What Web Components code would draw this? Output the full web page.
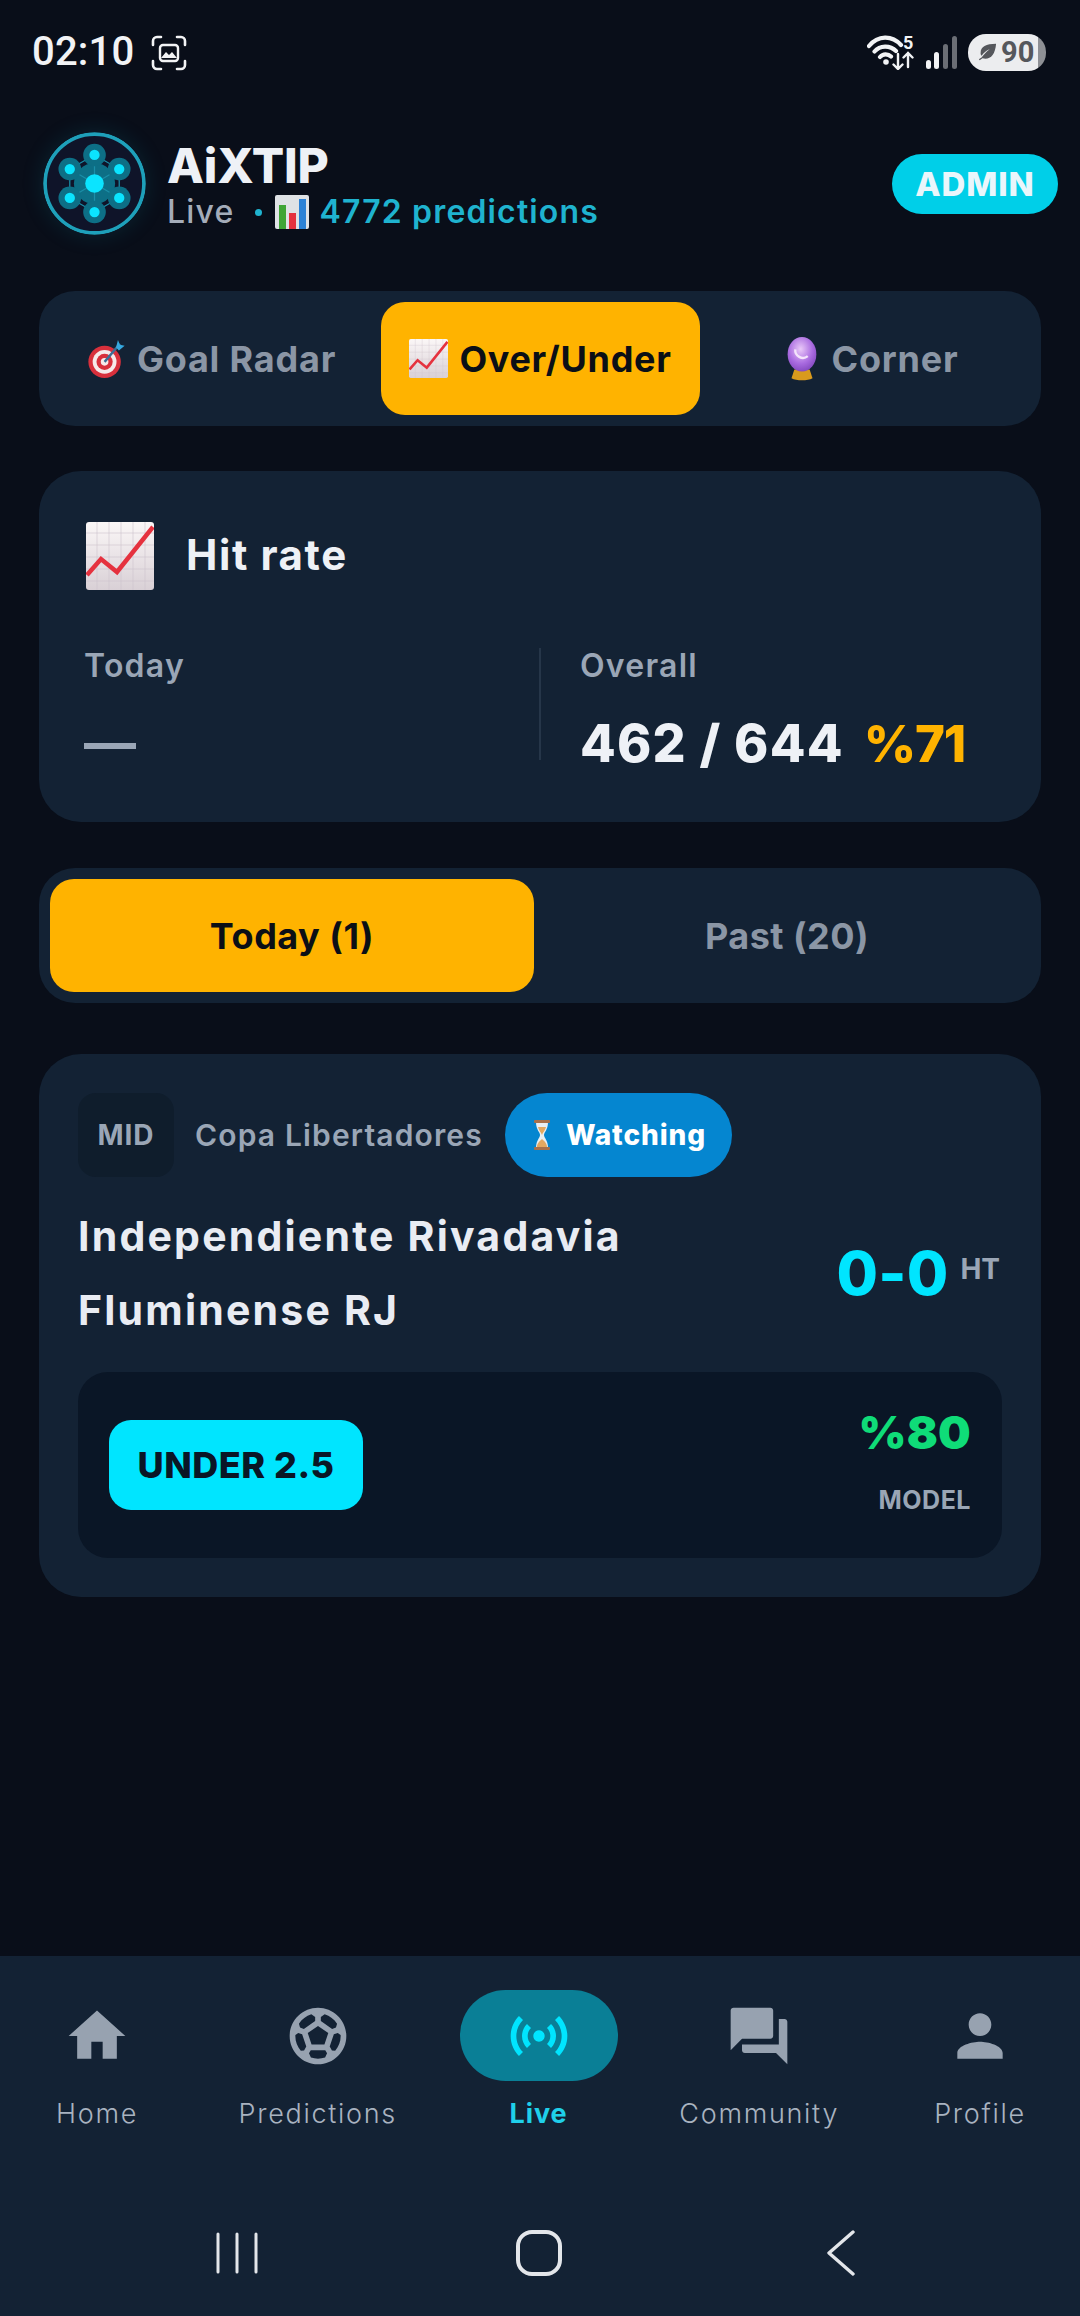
<!DOCTYPE html>
<html lang="en">
<head>
<meta charset="utf-8">
<title>AiXTIP</title>
<style>
  html, body { margin: 0; padding: 0; background: #090e19; }
  body { font-family: Inter, "Noto Sans", sans-serif; width: 1080px; height: 2316px; overflow: hidden; }
</style>
</head>
<body>
<app-screen>
  <status-bar></status-bar>
  <app-header></app-header>
  <mode-tabs></mode-tabs>
  <hit-rate></hit-rate>
  <day-switch></day-switch>
  <match-card></match-card>
  <bottom-nav slot="bottom"></bottom-nav>
</app-screen>

<script>
const ICONS = {
  target: `<svg viewBox="0 0 40 44" width="100%" height="100%"><circle cx="18" cy="25" r="17" fill="#d8303c"/><circle cx="18" cy="25" r="12.5" fill="#f6eaea"/><circle cx="18" cy="25" r="8.5" fill="#d8303c"/><circle cx="18" cy="25" r="4" fill="#f6eaea"/><path d="M18 25L34 6" stroke="#3a6f96" stroke-width="2.5"/><path d="M30 10l2-8 2 5 5 1-6 5z" fill="#35a9e0"/></svg>`,
  chart: `<svg viewBox="0 0 68 68" width="100%" height="100%"><defs><linearGradient id="p" x1="0" y1="0" x2="0" y2="1"><stop offset="0" stop-color="#fbf7f7"/><stop offset="1" stop-color="#d9d0d6"/></linearGradient></defs><rect width="68" height="68" rx="3" fill="url(#p)"/><path d="M0 11H68M0 23H68M0 35H68M0 47H68M0 59H68M11 0V68M23 0V68M35 0V68M47 0V68M59 0V68" stroke="#cfc4cc" stroke-width=".6"/><path d="M1 53L15 37L31 50L67 5" fill="none" stroke="#e5323f" stroke-width="4.5"/></svg>`,
  ball: `<svg viewBox="0 0 36 46" width="100%" height="100%"><defs><radialGradient id="b" cx=".45" cy=".35" r=".7"><stop offset="0" stop-color="#e9c8f8"/><stop offset=".6" stop-color="#a96be0"/><stop offset="1" stop-color="#7f45bb"/></radialGradient></defs><path d="M10 34h16l3 9c-5 3-17 3-22 0z" fill="#d99a1d"/><ellipse cx="18" cy="18" rx="15" ry="18" fill="url(#b)"/><path d="M11 13a8 8 0 0 0 13 7" stroke="#f4e4fb" stroke-width="2.5" fill="none"/></svg>`,
  glass: `<svg viewBox="0 0 18 30" width="100%" height="100%"><path d="M3 2h12c0 8-4 10-4 13s4 5 4 13H3c0-8 4-10 4-13S3 10 3 2z" fill="#e9eef2"/><path d="M5 7h8c-1 4-3 5-4 8-1-3-3-4-4-8zM4 27c0-4 3-6 5-8 2 2 5 4 5 8z" fill="#e4a860"/><rect x="1" y="0" width="16" height="3" rx="1" fill="#a8704a"/><rect x="1" y="27" width="16" height="3" rx="1" fill="#a8704a"/></svg>`,
  bars: `<svg viewBox="0 0 34 34" width="100%" height="100%"><rect width="34" height="34" rx="2" fill="#dfe2e5"/><rect x="4" y="10" width="7" height="24" fill="#3fa535"/><rect x="14" y="18" width="7" height="16" fill="#e5323f"/><rect x="24" y="4" width="7" height="30" fill="#2c82d6"/></svg>`,
  home: `M10 20v-6h4v6h5v-8h3L12 3 2 12h3v8z`,
  soccer: `M12 2C6.48 2 2 6.48 2 12s4.48 10 10 10 10-4.48 10-10S17.52 2 12 2zm1 3.3l1.35-.95c1.82.56 3.37 1.76 4.38 3.34l-.39 1.34-1.35.46L13 6.7V5.3zm-3.35-.95L11 5.3v1.4L7.01 9.49l-1.35-.46-.39-1.34c1.01-1.57 2.56-2.77 4.38-3.34zM7.08 17.11l-1.14.1C4.73 15.81 4 13.99 4 12c0-.12.01-.23.02-.35l1-.73 1.38.48 1.46 4.34-.78 1.37zm7.42 2.48c-.79.26-1.63.41-2.5.41s-1.71-.15-2.5-.41l-.69-1.49.64-1.1h5.11l.64 1.11-.7 1.48zM14.27 15H9.73l-1.35-4.02L12 8.44l3.63 2.54L14.27 15zm3.79 2.21l-1.14-.1-.79-1.37 1.46-4.34 1.39-.47 1 .73c.01.11.02.22.02.34 0 1.99-.73 3.81-1.94 5.21z`,
  sensors: `M7.76 16.24C6.67 15.16 6 13.66 6 12s.67-3.16 1.76-4.24l1.42 1.42C8.45 9.9 8 10.9 8 12c0 1.1.45 2.1 1.17 2.83l-1.41 1.41zm8.48 0C17.33 15.16 18 13.66 18 12s-.67-3.16-1.76-4.24l-1.42 1.42C15.55 9.9 16 10.9 16 12c0 1.1-.45 2.1-1.17 2.83l1.41 1.41zM12 10c-1.1 0-2 .9-2 2s.9 2 2 2 2-.9 2-2-.9-2-2-2zm8 2c0 2.21-.9 4.21-2.35 5.65l1.42 1.42C20.88 17.26 22 14.76 22 12s-1.12-5.26-2.93-7.07l-1.42 1.42C19.1 7.79 20 9.79 20 12zM6.35 6.35L4.93 4.93C3.12 6.74 2 9.24 2 12s1.12 5.26 2.93 7.07l1.42-1.42C4.9 16.21 4 14.21 4 12s.9-4.21 2.35-5.65z`,
  forum: `M21 6h-2v9H6v2c0 .55.45 1 1 1h11l4 4V7c0-.55-.45-1-1-1zm-4 6V3c0-.55-.45-1-1-1H3c-.55 0-1 .45-1 1v14l4-4h10c.55 0 1-.45 1-1z`,
  person: `M12 12c2.21 0 4-1.79 4-4s-1.79-4-4-4-4 1.79-4 4 1.79 4 4 4zm0 2c-2.67 0-8 1.34-8 4v2h16v-2c0-2.66-5.33-4-8-4z`,
};

class Base extends HTMLElement {
  constructor() {
    super();
    this.attachShadow({ mode: "open" });
  }
  connectedCallback() {
    this.shadowRoot.innerHTML = `<style>${this.constructor.styles}</style>${this.markup()}`;
  }
}

class AppScreen extends Base {
  static styles = `
    :host { display: flex; flex-direction: column; width: 1080px; height: 2316px; }
    main { flex: 1; display: flex; flex-direction: column; }
  `;
  markup() {
    return `<main><slot></slot></main><slot name="bottom"></slot>`;
  }
}

class StatusBar extends Base {
  static styles = `
    :host { display: flex; align-items: center; height: 104px; padding: 0 34px 0 32px; box-sizing: border-box; color: #f2f3f5; }
    .time { font: 500 40px/1 Roboto, sans-serif; letter-spacing: .2px; }
    .shot { width: 36px; height: 36px; margin: 2px 0 0 17px; }
    .right { margin-left: auto; display: flex; align-items: center; }
    .wifi { display: block; width: 48px; height: 42px; margin: -6px 11px 0 0; }
    .wifi text { font: 700 18px Roboto, sans-serif; fill: #f2f3f5; }
    .signal { display: block; width: 32px; height: 34px; margin: 2px 10px 0 0; }
    .batt { display: flex; align-items: center; width: 78px; height: 37px; border-radius: 18px; overflow: hidden;
            background: linear-gradient(90deg, #ecedef 0 90%, #8e9095 90%); color: #55575c; font: 700 29px/37px Roboto, sans-serif; }
    .batt svg { width: 20px; height: 20px; margin: 0 4px 0 9px; flex: none; }
  `;
  markup() {
    return `
      <span class="time">02:10</span>
      <svg class="shot" viewBox="0 0 36 36" fill="none" stroke="#f2f3f5" stroke-width="2.6" stroke-linecap="round">
        <path d="M2 10V6a4 4 0 0 1 4-4h4M26 2h4a4 4 0 0 1 4 4v4M34 26v4a4 4 0 0 1-4 4h-4M10 34H6a4 4 0 0 1-4-4v-4"/>
        <rect x="9" y="10" width="18" height="16" rx="3" stroke-width="2.4"/>
        <path d="M10 23l5-6 3 3 3-3 5 6z" fill="#f2f3f5" stroke="none"/>
      </svg>
      <div class="right">
        <svg class="wifi" viewBox="0 -8 48 42" fill="none" stroke="#f2f3f5" stroke-width="4.2" stroke-linecap="round">
          <path d="M2 10C11-1 25-1 34 9M7.5 15.5C13 9 23 9 29 15M13 21c3-3.5 8-3.5 11-.5"/>
          <circle cx="19" cy="26" r="2.8" fill="#f2f3f5" stroke="none"/>
          <path d="M31 18v15M26.5 28.5l4.5 4.5 4.5-4.5M41 31V17M36.5 21.5l4.5-4.5 4.5 4.5" stroke-width="2.4"/>
          <text x="36" y="13" stroke="none">5</text>
        </svg>
        <svg class="signal" viewBox="0 0 32 34">
          <rect x="0" y="24" width="5" height="9" rx="2.5" fill="#f2f3f5"/>
          <rect x="8" y="16" width="5" height="17" rx="2.5" fill="#f2f3f5"/>
          <rect x="17" y="8" width="5" height="25" rx="2.5" fill="#6b6e75"/>
          <rect x="26" y="0" width="5" height="33" rx="2.5" fill="#6b6e75"/>
        </svg>
        <div class="batt">
          <svg viewBox="0 0 22 20"><path d="M21 1C10 1 4 4 4 11c0 1 0 2 1 3 3-4 6-6 9-7-3 2-6 5-9 9l-3 2 1 1 3-2c8 2 14-3 15-16z" fill="#55575c"/></svg>90
        </div>
      </div>
    `;
  }
}

class AppHeader extends Base {
  static styles = `
    :host { display: flex; align-items: center; margin-top: 28px; padding: 0 22px 0 43px; }
    .logo { width: 103px; height: 103px; flex: none; border-radius: 50%; box-shadow: 0 0 22px #0e7f9433; }
    .txt { margin-left: 21px; display: flex; flex-direction: column; padding-top: 6px; }
    .name { font-size: 48px; font-weight: 800; line-height: 50px; color: #eef1f6; letter-spacing: -.2px; margin-top: -2px; }
    .sub { display: flex; align-items: center; font-size: 32px; font-weight: 500; line-height: 36px; color: #a4acb9; margin-top: 3px; letter-spacing: 1.2px; }
    .dot { width: 7px; height: 7px; border-radius: 50%; background: #1fb3cf; margin: 0 13px 0 20px; }
    .bars { width: 34px; height: 34px; margin-right: 11px; }
    .count { color: #1fb3cf; font-weight: 600; letter-spacing: 1.15px; }
    .admin { margin-left: auto; width: 166px; height: 60px; border-radius: 30px; background: #00cfe8; color: #eaf6fb;
             font-size: 33px; font-weight: 800; line-height: 60px; text-align: center; letter-spacing: .9px; }
  `;
  markup() {
    const nodes = [[50, 22.3], [26, 36], [74, 36], [26, 64], [74, 64], [50, 77.7]];
    return `
      <svg class="logo" viewBox="0 0 100 100">
        <circle cx="50" cy="50" r="48" fill="#0f1429" stroke="#1ea0ba" stroke-width="3.6"/>
        <circle cx="50" cy="50" r="20" fill="#0d6f86"/>
        <g stroke="#1b8fa8" stroke-width="1.2" fill="none">
          ${nodes.map(n => `<path d="M50 50L${n[0]} ${n[1]}"/>`).join("")}
          <path d="M50 22.3L74 36V64L50 77.7L26 64V36Z"/>
        </g>
        ${nodes.map(n => `<circle cx="${n[0]}" cy="${n[1]}" r="11" fill="#0d6f86"/><circle cx="${n[0]}" cy="${n[1]}" r="5" fill="#0be4ff"/>`).join("")}
        <circle cx="50" cy="50" r="9" fill="#0be4ff"/>
      </svg>
      <div class="txt">
        <span class="name">AiXTIP</span>
        <div class="sub"><span>Live</span><i class="dot"></i><span class="bars">${ICONS.bars}</span><span class="count">4772 predictions</span></div>
      </div>
      <div class="admin">ADMIN</div>
    `;
  }
}

class ModeTabs extends Base {
  static styles = `
    :host { display: grid; grid-template-columns: 331px 319px 1fr; height: 113px; margin: 56px 39px 0; padding: 11px; background: #132234; border-radius: 36px; }
    div { display: flex; align-items: center; justify-content: center; border-radius: 24px; color: #8b96a5; font-size: 36px; font-weight: 700; letter-spacing: .8px; }
    .first { padding-right: 8px; }
    .on { background: #ffb300; color: #0b0f16; letter-spacing: .7px; }
    span { display: block; flex: none; }
    .a { width: 39px; height: 42px; margin-right: 11px; }
    .b { width: 39px; height: 39px; margin-right: 11px; }
    .c { width: 36px; height: 44px; margin: 0 12px 0 12px; }
  `;
  markup() {
    return `
      <div class="first"><span class="a">${ICONS.target}</span>Goal Radar</div>
      <div class="on"><span class="b">${ICONS.chart}</span>Over/Under</div>
      <div><span class="c">${ICONS.ball}</span>Corner</div>
    `;
  }
}

class HitRate extends Base {
  static styles = `
    :host { display: block; height: 351px; margin: 45px 39px 0; padding: 51px 45px 0 45px; box-sizing: border-box; background: #132234; border-radius: 42px; }
    .head { display: flex; align-items: center; height: 68px; color: #eef1f6; font-size: 42px; font-weight: 700; letter-spacing: 1.6px; }
    .head span { width: 68px; height: 68px; margin: 0 32px 0 2px; }
    .head b { font-weight: 700; padding-bottom: 4px; }
    .cols { display: grid; grid-template-columns: 455px 1fr; grid-template-rows: 112px; margin-top: 58px; }
    .col + .col { border-left: 2px solid #263649; padding-left: 39px; }
    .lab { color: #9aa6b6; font-size: 32px; font-weight: 600; line-height: 36px; letter-spacing: 1.25px; }
    .val { margin-top: 35px; font-size: 52px; font-weight: 800; line-height: 50px; color: #eef1f6; display: flex; letter-spacing: 1.2px; white-space: nowrap; }
    .dash { color: #9aa6b6; font-weight: 700; }
    .pct { color: #ffb300; margin-left: 20px; font-size: 51px; letter-spacing: -1.2px; }
  `;
  markup() {
    return `
      <div class="head"><span>${ICONS.chart}</span><b>Hit rate</b></div>
      <div class="cols">
        <div class="col"><div class="lab">Today</div><div class="val dash">—</div></div>
        <div class="col"><div class="lab">Overall</div><div class="val">462 / 644<span class="pct">%71</span></div></div>
      </div>
    `;
  }
}

class DaySwitch extends Base {
  static styles = `
    :host { display: grid; grid-template-columns: 484px 1fr; height: 113px; margin: 46px 39px 0; padding: 11px; background: #132234; border-radius: 36px; }
    div { display: flex; align-items: center; justify-content: center; border-radius: 24px; color: #8b96a5; font-size: 36px; font-weight: 700; letter-spacing: .5px; }
    .on { background: #ffb300; color: #0b0f16; }
    .off { padding-left: 10px; }
  `;
  markup() {
    return `<div class="on">Today (1)</div><div class="off">Past (20)</div>`;
  }
}

class MatchCard extends Base {
  static styles = `
    :host { display: block; height: 543px; margin: 51px 39px 0; padding: 39px 39px 0; box-sizing: border-box; background: #132234; border-radius: 42px; }
    .top { display: flex; align-items: center; height: 84px; }
    .code { width: 96px; height: 84px; flex: none; border-radius: 18px; background: #0f1d2c; color: #9aa6b6; font-size: 28px; font-weight: 700; line-height: 84px; text-align: center; letter-spacing: 1px; }
    .comp { margin-left: 21px; color: #9aa6b6; font-size: 30px; font-weight: 600; letter-spacing: 1.15px; white-space: nowrap; }
    .state { display: flex; align-items: center; margin-left: 22px; width: 227px; height: 84px; box-sizing: border-box; padding-left: 28px; border-radius: 42px; background: #0586d0; color: #fff; font-size: 28px; font-weight: 800; letter-spacing: .9px; }
    .state span { width: 18px; height: 30px; margin-right: 15px; }
    .mid { display: flex; justify-content: space-between; align-items: center; margin-top: 22px; height: 148px; }
    .teams { color: #e9ecf3; font-size: 41px; font-weight: 700; line-height: 74px; letter-spacing: 2.2px; }
    .score { display: flex; align-items: flex-start; margin-right: 2px; }
    .num { color: #00e5ff; font-size: 60px; font-weight: 800; line-height: 60px; letter-spacing: .2px; }
    .ht { color: #9aa6b6; font-size: 28px; font-weight: 700; line-height: 30px; margin-left: 12px; margin-top: 11px; }
    .pick { display: flex; justify-content: space-between; align-items: center; height: 186px; margin-top: 25px; padding: 0 31px; box-sizing: border-box; background: #0a1626; border-radius: 30px; }
    .tag { width: 254px; height: 90px; border-radius: 22px; background: #00e5ff; color: #0a1626; font-size: 36px; font-weight: 800; line-height: 90px; text-align: center; letter-spacing: .5px; }
    .prob { text-align: right; padding-bottom: 10px; }
    .pc { color: #0fdc78; font-size: 46px; font-weight: 900; line-height: 50px; letter-spacing: .2px; }
    .mod { color: #9aa6b6; font-size: 25px; font-weight: 700; line-height: 28px; margin-top: 29px; letter-spacing: .5px; }
  `;
  markup() {
    return `
      <div class="top">
        <div class="code">MID</div>
        <div class="comp">Copa Libertadores</div>
        <div class="state"><span>${ICONS.glass}</span>Watching</div>
      </div>
      <div class="mid">
        <div class="teams">Independiente Rivadavia<br>Fluminense RJ</div>
        <div class="score"><div class="num">0-0</div><div class="ht">HT</div></div>
      </div>
      <div class="pick">
        <div class="tag">UNDER 2.5</div>
        <div class="prob"><div class="pc">%80</div><div class="mod">MODEL</div></div>
      </div>
    `;
  }
}

class NavItem extends Base {
  static styles = `
    :host { display: flex; flex-direction: column; align-items: center; width: 130px; color: #97a2b0; }
    .pill { display: flex; align-items: center; justify-content: center; width: 158px; height: 91px; border-radius: 46px; }
    svg { width: 68px; height: 68px; fill: currentColor; }
    label { margin-top: 17px; font-size: 27px; font-weight: 300; line-height: 32px; letter-spacing: 1.7px; white-space: nowrap; color: #a9b3c0; }
    :host([active]) .pill { background: #0a7f96; color: #00e5ff; }
    :host([active]) label { color: #1fd0ea; font-weight: 700; letter-spacing: .9px; }
  `;
  markup() {
    return `
      <div class="pill"><svg viewBox="0 0 24 24"><path d="${ICONS[this.getAttribute("icon")]}"/></svg></div>
      <label>${this.getAttribute("label")}</label>
    `;
  }
}

class BottomNav extends Base {
  static styles = `
    :host { display: block; height: 360px; background: #132234; box-sizing: border-box; padding-top: 34px; }
    nav { display: flex; justify-content: space-between; padding: 0 35px 0 32px; }
    .sys { display: flex; align-items: center; margin-top: 100px; height: 46px; padding-left: 215px; }
    .sys svg { display: block; }
    .gap1 { margin-left: 257px; }
    .gap2 { margin-left: 264px; }
  `;
  markup() {
    return `
      <nav>
        <nav-item icon="home" label="Home"></nav-item>
        <nav-item icon="soccer" label="Predictions"></nav-item>
        <nav-item icon="sensors" label="Live" active></nav-item>
        <nav-item icon="forum" label="Community"></nav-item>
        <nav-item icon="person" label="Profile"></nav-item>
      </nav>
      <div class="sys">
        <svg width="44" height="44" viewBox="0 0 44 44" stroke="#e3e6ea" stroke-width="3" stroke-linecap="round"><path d="M3 3v38M22 3v38M41 3v38"/></svg>
        <svg class="gap1" width="46" height="46" viewBox="0 0 46 46" fill="none" stroke="#e3e6ea" stroke-width="4"><rect x="2" y="2" width="42" height="42" rx="14"/></svg>
        <svg class="gap2" width="30" height="46" viewBox="0 0 30 46" fill="none" stroke="#e3e6ea" stroke-width="3.4" stroke-linecap="round" stroke-linejoin="round"><path d="M27 2L3 23l24 21"/></svg>
      </div>
    `;
  }
}

customElements.define("app-screen", AppScreen);
customElements.define("status-bar", StatusBar);
customElements.define("app-header", AppHeader);
customElements.define("mode-tabs", ModeTabs);
customElements.define("hit-rate", HitRate);
customElements.define("day-switch", DaySwitch);
customElements.define("match-card", MatchCard);
customElements.define("nav-item", NavItem);
customElements.define("bottom-nav", BottomNav);
</script>
</body>
</html>
